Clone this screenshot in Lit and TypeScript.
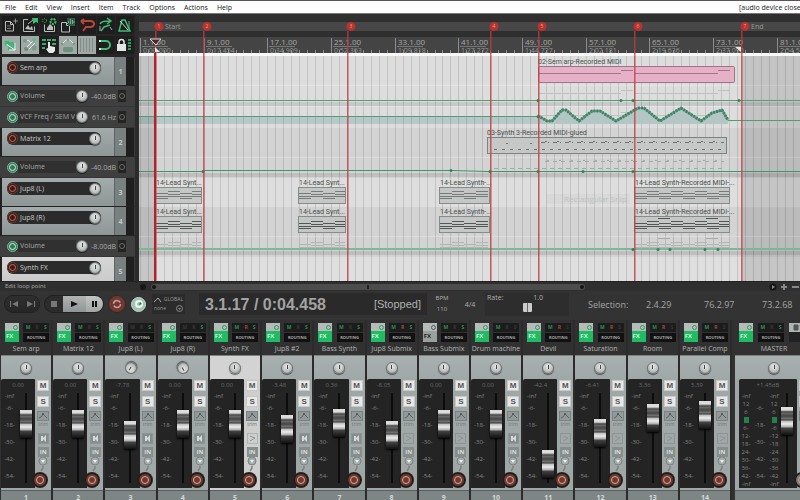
import { LitElement, html, css, svg, nothing } from "lit";
import { customElement, property } from "lit/decorators.js";
import { classMap } from "lit/directives/class-map.js";

const reset = css`
  * { box-sizing: border-box; }
  button, input { margin: 0; padding: 0; border: 0; font: inherit; color: inherit; background: none; }
  button { display: flex; align-items: center; justify-content: center; cursor: pointer; }
  svg { display: block; }
`;

const knob = css`
  .knob {
    appearance: none;
    flex: none;
    width: 12px;
    height: 12px;
    border-radius: 50%;
    background:
      linear-gradient(#444, #444) 50% 2px / 1px 4px no-repeat,
      radial-gradient(circle at 50% 35%, #e8e9e8, #c0c4c3 55%, #8e9291);
    border: 1px solid #6d7271;
    box-shadow: 0 1px 1px #0008;
  }
  .knob::-webkit-slider-thumb { appearance: none; width: 2px; height: 2px; opacity: 0; }
`;

/* ---------- toolbar ---------- */

const page = svg`<path d="M3.5 5.5h5l3 3v6.500h-8z M8.500 5.500v3h3" fill="none" stroke="#b9bdbb"/>`;
const TOOLS = [
  { name: "New project", on: false, icon: svg`${page}<path d="M11 5h5M13.500 2.500v5" stroke="#8d918f"/><path d="M5 10h4M5 12.500h4" stroke="#777"/>` },
  { name: "Open project", on: false, icon: svg`<path d="M7 3.500H2.500v12h11v-5" fill="none" stroke="#b9bdbb"/><path d="M4 13l3-4 2 3 2-2 1 4z" fill="#b9bdbb"/><path d="M7 8l5-4" stroke="#b9bdbb"/><path d="M11 2h6v5l-2-1-3 2 0-2z" fill="#3ebc72"/>` },
  { name: "Save project", on: false, icon: svg`<path d="M4.500 8.500v7h10v-6" fill="none" stroke="#b9bdbb"/><path d="M7 12l3-4 3 3v3H7z" fill="#b9bdbb"/><circle cx="4.500" cy="4.500" r="2" fill="none" stroke="#3ebc72" stroke-dasharray="1 1"/><circle cx="13" cy="5.500" r="2.500" fill="none" stroke="#3ebc72" stroke-width="2" stroke-dasharray="2 1"/>` },
  { name: "Project settings", on: false, icon: svg`<g transform="translate(-1 1)">${page}</g><path d="M8 2h8v8H9z" fill="#2f5f4a"/><path d="M9.500 7V5M11.500 8V3M13.500 8V4M15 7V5" stroke="#77a892"/>` },
  { name: "Undo", on: false, icon: svg`<path d="M3 5h9.500a3.500 3 0 0 1 0 6H8l-3 4M3 5l3-2M3 5l3 3" fill="none" stroke="#bf4438" stroke-width="2"/>` },
  { name: "Redo", on: false, icon: svg`<path d="M3 8c1-3 5-3 10-3M10 2l4 3-4 3M4 15l3-4 6-2" fill="none" stroke="#3ebc72" stroke-width="1.500"/><path d="M3 10v5M13 11l2 3" stroke="#a9adab"/>` },
  { name: "Metronome", on: false, icon: svg`<path d="M6 4h3l5 11H3z" fill="none" stroke="#3ebc72" stroke-width="1.500"/><path d="M4 5l8 9" stroke="#d4d7d5"/><path d="M13 5v9" stroke="#3ebc72"/>` },
  { name: "Auto crossfade", on: true, icon: svg`<path d="M2 4h5v6H2z" fill="#64c08c"/><path d="M6 6h5l3 3-3 5H6z" fill="#49b07a"/><path d="M4 8l9 6M13 7v7H7" stroke="#f0f4f1" fill="none"/><path d="M4 5v4M6 5v3" stroke="#2f9c60"/>` },
  { name: "Item grouping", on: true, icon: svg`<path d="M3 14L14 3M3 7l4-3 3 3-6 6M8 13l6-6" stroke="#e4e8e5" fill="none"/><circle cx="4" cy="5" r="2" fill="#7f9a8c"/><circle cx="13" cy="12" r="2.500" fill="#7f9a8c"/><circle cx="13" cy="4" r="2" fill="#66b98a"/><circle cx="5" cy="13" r="2" fill="#6d8a7b"/>` },
  { name: "Ripple editing", on: false, icon: svg`<path d="M2 3h4v2H2zM7 3h4v2H7zM12 3h4v2h-4zM2 7h4v2H2zM12 7h4v2h-4zM2 11h3v2H2z" fill="#3aa869"/><path d="M8 6h2v4l5 1v4l-2 2H9l-3-4 2-1z" fill="#e6e9e7"/>` },
  { name: "Envelope points", on: true, icon: svg`<path d="M2 9l5-5h4l5 5" fill="none" stroke="#dfe4e1"/><circle cx="3" cy="8" r="1" fill="#5b8a72"/><circle cx="9" cy="4" r="1" fill="#5b8a72"/><circle cx="15" cy="8" r="1" fill="#5b8a72"/><rect x="4" y="11" width="10" height="5" rx="2" fill="#6b917e"/>` },
  { name: "Grid lines", on: true, icon: svg`<path d="M2.500 2v14M5.500 2v14M8.500 2v14M11.500 2v14M14.500 2v14" stroke="#838b89"/>` },
  { name: "Snap", on: false, icon: svg`<path d="M3 5h6a4 4 0 0 1 0 8H3" fill="none" stroke="#3ebc72" stroke-width="2"/><path d="M3 4v2M3 12v2" stroke="#e6e9e7" stroke-width="2"/>` },
  { name: "Lock", on: false, icon: svg`<rect x="1" y="8" width="9" height="7" fill="#e3e6e4"/><path d="M3 8V6a2.500 2.500 0 0 1 5 0v2" fill="none" stroke="#e3e6e4" stroke-width="1.500"/><path d="M12 4h3M12 7h3M12 10h3M12 13h3" stroke="#3ebc72" stroke-width="1.500"/>` },
];

@customElement("tool-bar")
export class ToolBar extends LitElement {
  static styles = [reset, css`
    :host { display: grid; grid-template-columns: repeat(7, 18px); gap: 2px 1px; padding: 2px 0 3px 2px; background: #262626; height: 43px; overflow: hidden; }
    button { width: 18px; height: 18px; background: #1e1e1e; }
    .on { background: #9fa9a5; }
  `];
  render() {
    return TOOLS.map((t) => html`<button class=${classMap({ on: t.on })} aria-label=${t.name}><svg width="18" height="18" viewBox="0 0 18 18">${t.icon}</svg></button>`);
  }
}

/* ---------- track panels ---------- */

@customElement("track-panel")
export class TrackPanel extends LitElement {
  @property() name = "";
  @property({ type: Number }) number = 0;
  @property({ type: Boolean, reflect: true }) selected = false;
  static styles = [reset, knob, css`
    :host { display: flex; height: 29px; padding: 0 0 1px 2px; background: #222; font-size: 7px; overflow: hidden; }
    .face { flex: 1; background: linear-gradient(#a3acaa, #8e9796); padding: 4px 0 0 5px; }
    :host([selected]) .face { background: linear-gradient(#d5d6d5, #c8c9c8); }
    .plate { display: flex; align-items: center; gap: 2px; width: 94px; height: 13px; border-radius: 6px; background: #2b2b2b; color: #cacaca; }
    .arm { width: 11px; height: 11px; border-radius: 50%; background: #3c1c17; border: 1px solid #6e3a31; flex: none; }
    .arm::after { content: ""; width: 5px; height: 5px; border-radius: 50%; border: 1px solid #c2705f; }
    .name { flex: 1; white-space: nowrap; line-height: 12px; }
    .tab { width: 12px; background: #788180; border-left: 1px solid #5d6564; color: #c3c9c8; font-weight: 700; display: flex; align-items: center; justify-content: center; }
    .meter { width: 9px; background: #1f1f1f; border-right: 1px solid #3a3a3a; }
  `];
  render() {
    return html`
      <div class="face"><div class="plate">
        <button class="arm" aria-label="Record arm ${this.name}"></button>
        <span class="name">${this.name}</span>
        <input class="knob" type="range" aria-label="Volume ${this.name}" />
      </div></div>
      <div class="tab">${this.number}</div><div class="meter"></div>`;
  }
}

@customElement("envelope-panel")
export class EnvelopePanel extends LitElement {
  @property() name = "";
  @property() value = "";
  static styles = [reset, knob, css`
    :host { display: flex; align-items: center; height: 21px; padding: 0 9px 0 7px; background: #3f3f3f; border-bottom: 1px solid #353535; font-size: 7px; color: #a8a8a8; }
    .dot { width: 11px; height: 11px; border-radius: 50%; background: #2f7a55; border: 1px solid #7fb89b; flex: none; }
    .dot::after { content: ""; width: 5px; height: 5px; border-radius: 50%; border: 1px solid #d4ede0; }
    .name { flex: 1; height: 12px; line-height: 12px; padding-left: 2px; background: #303030; overflow: hidden; white-space: nowrap; min-width: 0; }
    .value { width: 28px; text-align: right; white-space: nowrap; flex: none; }
    .mod { width: 8px; height: 12px; margin-left: 2px; background: #242424; color: #777; flex: none; }
    .mod::after { content: ""; width: 4px; height: 4px; border: 1px solid #6b6b6b; border-radius: 50%; }
  `];
  render() {
    return html`
      <button class="dot" aria-label="Arm ${this.name}"></button>
      <span class="name">${this.name}</span>
      <input class="knob" type="range" aria-label=${this.name} />
      <span class="value">${this.value}</span>
      <button class="mod" aria-label="Modulation ${this.name}"></button>`;
  }
}

/* ---------- arrange view ---------- */

const BAR = 7.96;
const TOP = { lane: 8, ruler: 23, canvas: 42 };
const RULER: [number, string, string][] = [
  [1, "1.1.00", "0:00.000"], [9, "9.1.00", "0:17.454"], [17, "17.1.00", "0:34.909"], [25, "25.1.00", "0:52.363"],
  [33, "33.1.00", "1:09.818"], [41, "41.1.00", "1:27.272"], [49, "49.1.00", "1:44.727"], [57, "57.1.00", "2:02.181"],
  [65, "65.1.00", "2:19.636"], [73, "73.1.00", "2:37.090"], [81, "81.1.00", "2:54.545"],
];
const MARKERS: [number, string, string][] = [
  [16, "1", "Start"], [64, "2", ""], [208, "3", ""], [351, "4", ""], [399, "5", ""], [495, "6", ""], [602, "7", "End"],
];
/* y, height, shade of every lane below the ruler */
const LANES: [number, number, string][] = [
  [42, 72, "#dcdddc"], [114, 50, "#d2d3d2"], [164, 29, "#dddedd"], [193, 50, "#d2d3d2"], [243, 24, "#dedfde"],
];
const LEADS: [number, number, string][] = [
  [16, 47, "14-Lead Synt..."], [159, 48, "14-Lead Synt..."], [300, 51, "14-Lead Synth-..."], [495, 96, "14-Lead Synth-Recorded MIDI-..."],
];
const WAVE = "399,102 403,104 408,107 413,107 423,96 427,96 440,107 453,97 461,97 477,107 499,94 505,94 521,107 542,94 562,107 573,99 583,96 589,106";

function notes(x: number, y: number, w: number, color: string, strong = false) {
  const out = [];
  for (let i = 0; i * 12 < w - 4; i++) {
    const dy = i % 2 ? -1 : 1;
    const len = Math.min(12, w - i * 12);
    for (const row of strong ? [0, 3, 5] : [-1, 2, 4]) {
      out.push(svg`<rect x=${x + i * 12} y=${y + row + dy} width=${len} height="1" fill=${color}></rect>`);
    }
  }
  return out;
}

@customElement("arrange-view")
export class ArrangeView extends LitElement {
  static styles = css`
    :host { display: block; min-width: 0; overflow: hidden; background: #2f2f2f; }
    svg { display: block; width: 100%; height: 267px; font-family: "Open Sans", "Noto Sans", sans-serif; font-size: 7px; }
    .bars { font-size: 8px; fill: #a8a8a8; }
    .clip { fill: #4a4f4d; font-family: Roboto, "Noto Sans", sans-serif; }
    .ghost { fill: #bfc1c2; font-size: 8px; }
    .mark { font-size: 5px; fill: #e0a8a2; text-anchor: middle; }
    .title { fill: #9a9a9a; }
  `;
  render() {
    const bars = Array.from({ length: 240 }, (_, i) => Math.round(1 + i * BAR));
    return html`<svg role="img" aria-label="Arrange view">
      <rect y=${TOP.lane} width="100%" height="9" fill="#464746"></rect>
      <rect y=${TOP.ruler} width="100%" height="16" fill="#434443"></rect>
      <rect y="39" width="100%" height="3" fill="#f8f8f8"></rect>
      ${bars.map((x) => svg`<rect x=${x} y="36" width="1" height="3" fill="#8c8c8c"></rect>`)}
      ${RULER.map(([n, a, b]) => {
        const x = Math.round(1 + (n - 1) * BAR);
        return svg`<rect x=${x} y="24" width="1" height="15" fill="#8c8c8c"></rect>
          <text class="bars" x=${x + 3} y="31">${a}</text>
          <rect x=${x + 2} y="32" width="26" height="1" fill="#777"></rect>
          <text x=${x + 3} y="39" fill="#989898">${b}</text>`;
      })}
      ${LANES.map(([y, h, c]) => svg`<rect y=${y} width="100%" height=${h} fill=${c}></rect>`)}
      <rect y="102" width="399" height="8" fill="#b8c8c7"></rect>
      ${[88, 159, 237].map((y) => svg`<rect y=${y} width="100%" height="4" fill="#00000018"></rect>`)}
      ${bars.map((x) => svg`<rect x=${x} y="42" width="1" height="225" fill="#0000001f"></rect>`)}
      ${[71, 92, 143, 222].map((y) => svg`<rect y=${y} width="100%" height="1" fill="#ffffff40"></rect>`)}
      <rect x="0" y="42" width="16" height="225" fill="#0000001c"></rect>
      <rect x="603" y="42" width="100%" height="225" fill="#0000001c"></rect>

      <rect x="407" y="180" width="84" height="10" fill="#00000006"></rect>
      <text class="ghost" x="425" y="188">Rectangular Snip</text>

      <text class="clip" x="399" y="50">02-Sem arp-Recorded MIDI</text>
      <rect x="399.5" y="52.500" width="196" height="16" rx="1" fill="#e6b0c6" stroke="#9c7484"></rect>
      <path d="M400 59.500h82m0-3h12m2 3h83m0-3h12" stroke="#a3758a" fill="none"></path>
      <path d="M400 79.500h82m0-3h12m2 3h83m0-3h12M400 101.500h82m0-3h12m2 3h83" stroke="#bfc1c0" fill="none"></path>

      <text class="clip" x="348" y="121">03-Synth 3-Recorded MIDI-glued</text>
      <rect x="348.500" y="123.500" width="239" height="16" fill="#c6c8c7" stroke="#7d8382"></rect>
      <path d="M355 135.500h230" stroke="#6c7270" stroke-dasharray="3 5"></path>
      <path d="M367 129.500h34" stroke="#6c7270" stroke-dasharray="2 22"></path>
      <path d="M402 128.500h183" stroke="#6c7270" stroke-dasharray="4 3 1 4"></path>
      <path d="M406 127.500h179" stroke="#6c7270" stroke-dasharray="2 10"></path>
      <path d="M355 154.500h230M406 147.500h179" stroke="#a5a9a8" stroke-dasharray="4 4"></path>
      <path d="M408 146.500h177" stroke="#a5a9a8" stroke-dasharray="2 10"></path>

      ${LEADS.map(([x, w, label]) => svg`
        ${[173, 202].map((y, i) => svg`
          <text class="clip" x=${x + 1} y=${y - 2}>${label}</text>
          <rect x=${x + 0.5} y=${y + 0.5} width=${w - 1} height="16" fill="#c4c7c6" stroke="#858c8a"></rect>
          ${notes(x + 1, y + 6, w - 2, i ? "#515856" : "#757d7a", i === 1)}
        `)}
        ${notes(x + 1, 230, w - 2, "#b2b5b4", false)}`)}
      <path d="M519 204.500h12m36 0h12" stroke="#515856"></path>
      <path d="M519 224.500h12m36 0h12" stroke="#aaa"></path>

      <path d="M0 86.500h100000M0 102.500h399M589 106.500h100000" stroke="#4f9f76" fill="none"></path>
      <path d="M0 157.500h64v-1h248l36 1h100000" stroke="#3f9569" fill="none"></path>
      <path d="M0 235h100000" stroke="#7db795" stroke-width="2"></path>
      <polygon points="399,110 ${WAVE} 589,110" fill="#b3c6c3"></polygon>
      <polyline points=${WAVE} fill="none" stroke="#6ea08c" stroke-width="2"></polyline>
      <polyline points=${WAVE} fill="none" stroke="#3f8468" stroke-width="3" stroke-linejoin="round" stroke-dasharray="2 1"></polyline>
      ${[[399, 86], [482, 86], [494, 86], [600, 86], [399, 102], [64, 157], [312, 156], [351, 157], [399, 157], [444, 157], [494, 157], [494, 235], [519, 235], [531, 235], [566, 235], [579, 235]].map(
        ([x, y]) => svg`<circle cx=${x} cy=${y + 0.5} r="1.500" fill="#2f8458"></circle>`,
      )}

      ${MARKERS.map(([x, n, title]) => svg`
        <rect x=${x} y="17" width="2" height="250" fill="#bf3a4470"></rect>
        <rect x=${x} y="17" width="1" height="250" fill="#bf3a4490"></rect>
        <circle cx=${x + 4} cy="12.500" r="4.500" fill="#b8332f"></circle>
        <text class="mark" x=${x + 4} y="14">${n}</text>
        ${title ? svg`<text class="title" x=${x + 10} y="15">${title}</text>` : nothing}`)}
      <rect x="15" y="39" width="2" height="228" fill="#b5202a"></rect>
      <path d="M11 25h11l-5 6z" fill="#5a2320" stroke="#d9d9d9"></path>
      <path d="M16 38v-5l5 5zM602 38v-5h-6z" fill="#e4e4e4"></path>
    </svg>`;
  }
}

/* ---------- transport ---------- */

@customElement("transport-bar")
export class TransportBar extends LitElement {
  static styles = [reset, css`
    :host { display: flex; align-items: center; height: 29px; padding: 0 4px 3px; background: #333; color: #b0b0b0; font-size: 7px; white-space: nowrap; overflow: hidden; }
    .pill { display: flex; height: 18px; border-radius: 9px; overflow: hidden; flex: none; background: #222; border: 1px solid #202020; }
    .skip { width: 17px; background: linear-gradient(#2f2f2f, #262626); color: #777; }
    .play { width: 60px; margin-left: 4px; }
    .stop { width: 18px; background: #2c2c2c; color: #777; }
    .go { width: 23px; background: linear-gradient(#b0b5b4, #8f9594); color: #111; }
    .pause { flex: 1; background: linear-gradient(#c1c5c4, #a2a7a6); color: #111; }
    .round { flex: none; border-radius: 50%; }
    .rec { width: 18px; height: 18px; margin-left: 4px; background: #6b3b33; border: 1px solid #3d2520; color: #d89a8c; }
    .loop { width: 15px; height: 15px; margin-left: 5px; background: #9fc4b1; border: 1px solid #c4d6cc; color: #2d6a4b; }
    .global { margin-left: 6px; width: 33px; height: 20px; padding: 1px 2px; background: #2b2b2b; font-size: 5px; line-height: 9px; color: #999; flex: none; }
    .row { display: flex; align-items: center; justify-content: space-between; }
    .time { display: flex; align-items: center; justify-content: space-between; flex: none; width: 228px; height: 22px; margin-left: 14px; padding: 0 6px; background: #2a2a2a; font-family: "Liberation Sans", Arial, sans-serif; }
    .clock { font-size: 16px; font-weight: 700; color: #a3a3a3; }
    .state { font-size: 11px; }
    .bpm { width: 30px; text-align: center; line-height: 11px; font-size: 6px; flex: none; }
    .sig { width: 26px; text-align: center; flex: none; }
    .rate { width: 84px; flex: none; height: 23px; background: #2d2d2d; margin-left: 2px; padding: 0 2px; line-height: 10px; }
    .rate .row { padding-right: 24px; }
    .slider { appearance: none; display: block; width: 100%; height: 10px; }
    .slider::-webkit-slider-thumb { appearance: none; width: 9px; height: 9px; background: linear-gradient(90deg, #ccc 4px, #666 4px, #666 5px, #ccc 5px); border-radius: 1px; }
    .sel { display: flex; flex: 1; font-size: 9px; margin-left: 19px; color: #a5a5a5; }
    .sel span { width: 58px; flex: none; }
  `];
  render() {
    return html`
      <div class="pill">
        <button class="skip" aria-label="Go to start"><svg width="8" height="6"><path d="M0 0h1v6h-1zM8 0v6l-6-3z" fill="currentColor" /></svg></button>
        <button class="skip" aria-label="Go to end"><svg width="8" height="6"><path d="M7 0h1v6h-1zM0 0v6l6-3z" fill="currentColor" /></svg></button>
      </div>
      <div class="pill play">
        <button class="stop" aria-label="Stop"><svg width="6" height="6"><path d="M0 0h6v6h-6z" fill="currentColor" /></svg></button>
        <button class="go" aria-label="Play"><svg width="7" height="6"><path d="M0 0l7 3-7 3z" fill="currentColor" /></svg></button>
        <button class="pause" aria-label="Pause"><svg width="5" height="6"><path d="M0 0h2v6h-2zM3 0h2v6h-2z" fill="currentColor" /></svg></button>
      </div>
      <button class="round rec" aria-label="Record"><svg width="10" height="10"><circle cx="5" cy="5" r="3.500" fill="none" stroke="currentColor" stroke-width="1.500" stroke-dasharray="9 2" /></svg></button>
      <button class="round loop" aria-label="Repeat"><svg width="10" height="10"><circle cx="5" cy="5" r="3" fill="none" stroke="#f0f5f2" stroke-width="2" /><path d="M6 3l2 2-3 1z" fill="currentColor" /></svg></button>
      <div class="global">
        <div class="row"><svg width="8" height="6"><path d="M0 5l2-2 2-2 3 4" fill="none" stroke="#aaa" /></svg><span>GLOBAL</span></div>
        <div class="row"><span>none</span><svg width="7" height="7"><circle cx="3.500" cy="3.500" r="3" fill="none" stroke="#888" /><path d="M2 3h3l-1.500 2z" fill="#888" /></svg></div>
      </div>
      <div class="time"><span class="clock">3.1.17 / 0:04.458</span><span class="state">[Stopped]</span></div>
      <div class="bpm">BPM<br />110</div>
      <div class="sig">4/4</div>
      <label class="rate"><span class="row"><span>Rate:</span><span>1.0</span></span>
        <input class="slider" type="range" min="0" max="2" step="0.01" value="1" /></label>
      <div class="sel"><span>Selection:</span><span>2.4.29</span><span>76.2.97</span><span>73.2.68</span></div>`;
  }
}

/* ---------- mixer ---------- */

interface Strip {
  name: string; vol: string; fader: number; pan: number; lit: string; selected?: boolean; fxOff?: boolean; speaker?: boolean;
}
const STRIPS: Strip[] = [
  { name: "Sem arp", vol: "0.00", fader: 45, pan: 0, lit: "MS", speaker: true },
  { name: "Matrix 12", vol: "0.00", fader: 45, pan: 0, lit: "MS", speaker: true },
  { name: "Jup8 (L)", vol: "-7.78", fader: 34, pan: -150, lit: "S", speaker: true },
  { name: "Jup8 (R)", vol: "0.00", fader: 45, pan: 150, lit: "S", speaker: true },
  { name: "Synth FX", vol: "0.00", fader: 45, pan: 0, lit: "MRS", selected: true },
  { name: "Jup8 #2", vol: "-3.48", fader: 40, pan: 0, lit: "MS", speaker: true },
  { name: "Bass Synth", vol: "0.36", fader: 46, pan: 0, lit: "MS", speaker: true },
  { name: "Jup8 Submix", vol: "-8.05", fader: 34, pan: 0, lit: "MRS" },
  { name: "Bass Submix", vol: "0.00", fader: 45, pan: 0, lit: "MS", fxOff: true },
  { name: "Drum machine", vol: "0.00", fader: 45, pan: 0, lit: "M", speaker: true },
  { name: "Devil", vol: "-42.4", fader: 5, pan: 0, lit: "MR" },
  { name: "Saturation", vol: "-6.41", fader: 36, pan: 0, lit: "MR" },
  { name: "Room", vol: "3.36", fader: 51, pan: 0, lit: "MR" },
  { name: "Parallel Comp", vol: "5.39", fader: 54, pan: 0, lit: "MR" },
];
const METER_LEFT = ["-inf", "12", "6", "", "6-", "12-", "18-", "24-", "30-", "36-", "42-", "-inf"];
const METER_RIGHT = ["-inf", "12", "6", "", "-6", "-12", "-18", "-24", "-30", "-36", "-42", "-inf"];
const DB = ["-6-", "-18-", "-30-", "-42-", "-54-"];

@customElement("mixer-strip")
export class MixerStrip extends LitElement {
  @property({ attribute: false }) strip!: Strip;
  @property() label = "";
  @property({ type: Boolean, reflect: true }) master = false;
  @property({ type: Boolean, reflect: true }) selected = false;
  static styles = [reset, knob, css`
    :host { display: flex; flex-direction: column; min-width: 0; overflow: hidden; font-size: 7px; color: #b5b5b5; border-right: 2px solid #2b2b2b; --face: #a0a8a7; }
    :host([selected]) { --face: #cdcecd; }
    .head { display: flex; justify-content: space-between; padding: 3px 2px 0 4px; height: 22px; flex: none; }
    .fx { display: flex; flex-direction: column; width: 14px; height: 19px; background: #b4bbb9; color: #d8f5e4; font-size: 6px; font-weight: 700; }
    .power { height: 8px; width: 14px; padding: 2px 2px 0 8px; }
    .tag { width: 14px; height: 11px; line-height: 11px; background: #1fbd63; text-align: left; padding-left: 1px; }
    .off { background: #99a19f; color: #222; }
    .io { display: flex; flex-direction: column; gap: 1px; width: 26px; flex: none; }
    .leds { display: flex; justify-content: space-around; height: 9px; line-height: 9px; font-size: 5px; font-weight: 700; background: #1c1c1c; color: #383838; }
    .g { color: #2f8a58; } .r { color: #a04a3c; }
    .routing { height: 9px; background: #111; font-size: 4px; font-weight: 700; color: #aaa; }
    .mono { width: 17px; height: 19px; flex-direction: column; justify-content: flex-start; background: #222; font-size: 4px; font-weight: 700; color: #aaa; line-height: 10px; }
    .mono svg { background: #aeb5b3; }
    .name { height: 13px; line-height: 14px; text-align: center; white-space: nowrap; overflow: hidden; flex: none; }
    .pan { display: flex; justify-content: center; padding-top: 6px; height: 24px; flex: none; background: linear-gradient(#a9b1b0, var(--face)); border-top: 1px solid #7b8281; }
    :host([selected]) .pan { background: #d2d3d2; }
    .body { display: flex; flex: none; height: 112px; background: var(--face); padding-bottom: 3px; border-bottom: 1px solid #5a605f; }
    .panel { display: grid; grid-template-columns: 17px 1fr; grid-template-rows: 14px 95px; flex: 1; min-width: 0; height: 109px; background: #242424; border-radius: 2px 1px 0 0; font-size: 6px; color: #858585; }
    .vol { grid-column: 1 / -1; line-height: 13px; text-align: center; color: #6a6a6a; }
    .scale { display: flex; flex-direction: column; align-items: center; line-height: 6px; }
    .scale span { height: 17px; flex: none; white-space: nowrap; }
    .scale .inf { height: 12px; }
    .fader { appearance: none; writing-mode: vertical-lr; direction: rtl; width: 12px; height: 90px; margin-left: 2px; background: linear-gradient(#0c0c0c, #0c0c0c) 50% 0 / 2px 90px no-repeat; }
    .fader::-webkit-slider-thumb { appearance: none; width: 12px; height: 28px;
      background: linear-gradient(#dcdcdc 0 3px, #8d8d8d 4px, #3a3a3a 5px, #6c6c6c 6px, #444 9px, #777 12px, #333 13px, #bbb 14px, #ececec 17px, #aaa 20px, #444 21px, #111 28px);
      box-shadow: 0 1px 2px #000; }
    .side { display: flex; flex-direction: column; align-items: center; width: 16px; flex: none; padding-top: 1px; font-size: 8px; font-weight: 700; }
    .key { width: 12px; height: 11px; flex: none; background: #e8e8e8; border: 1px solid #c8c8c8; color: #555; font-family: "Liberation Sans", Arial, sans-serif; }
    .solo { margin-top: 5px; }
    .env { width: 12px; height: 10px; margin-top: 4px; flex: none; background: #929a99; border: 1px solid #7c8483; }
    .trim { font-size: 5px; line-height: 6px; font-weight: 400; color: #6f7776; height: 10px; }
    .spk { width: 11px; height: 11px; margin-top: 3px; flex: none; border: 1px solid #8d9594; }
    .wired { background: #868e8d; }
    :host([selected]) .spk { border-color: #b0b4b3; }
    .in { width: 11px; height: 10px; margin-top: 3px; flex: none; background: #868e8d; color: #d8dcdb; font-size: 6px; line-height: 8px; }
    .tri { height: 17px; flex: none; }
    .arm { width: 14px; height: 14px; flex: none; margin: -1px 6px 0 0; border-radius: 50%; background: #6b3a31; border: 1px solid #1f1513; box-shadow: 0 0 0 1px #242424; }
    .arm::after { content: ""; width: 6px; height: 6px; border-radius: 50%; border: 1px solid #e0a898; }
    .foot { flex: 1; min-height: 8px; background: #7e8685; color: #d3d8d7; font-weight: 700; text-align: center; line-height: 14px; }
    :host([master]) .head { justify-content: flex-start; gap: 5px; }
    :host([master]) .panel { margin-left: 4px; grid-template-columns: 42px 1fr; }
    :host([master]) .fader { margin-left: 0; }
    :host([master]) .arm { background: #777; }
    .meters { display: grid; grid-template-columns: 1fr 1fr 1fr; text-align: center; line-height: 6px; }
    .col { display: flex; flex-direction: column; }
    .col span { height: 8px; flex: none; }
    .mid { padding-top: 12px; }
    .mid span { height: 17px; }
    .col .lit { height: 6px; width: 5px; margin: 0 auto 2px; background: #23814f; }
  `];
  render() {
    const s = this.strip;
    const led = (c: string) => html`<span class=${classMap({ g: s.lit.includes(c) && c !== "R", r: s.lit.includes(c) && c === "R" })}>${c}</span>`;
    const meter = (labels: string[]) => html`<div class="col">${labels.map((d) => (d ? html`<span>${d}</span>` : html`<span class="lit"></span>`))}</div>`;
    return html`
      <div class="head">
        <button class="fx" aria-label="FX ${s.name}">
          <span class="power"><svg width="5" height="5"><circle cx="2.500" cy="2.500" r="2" fill="none" stroke=${s.fxOff ? "#555" : "#2a9c5c"} /></svg></span>
          <span class=${classMap({ tag: true, off: !!s.fxOff })}>FX</span>
        </button>
        <div class="io"><div class="leds">${["M", "R", "S"].map(led)}</div><button class="routing">ROUTING</button></div>
        ${this.master ? html`<button class="mono" aria-label="Mono"><svg width="17" height="9"><path d="M5 2h4v5H5zM11 2l3 5" fill="#555" stroke="#555" /></svg></button>` : nothing}
      </div>
      <div class="name">${s.name}</div>
      <div class="pan"><input class="knob" type="range" min="-150" max="150" .value=${String(s.pan)} style="rotate: ${s.pan}deg" aria-label="Pan ${s.name}" /></div>
      <div class="body">
        <div class="panel">
          <div class="vol">${s.vol}</div>
          ${this.master
            ? html`<div class="meters">${meter(METER_LEFT)}<div class="col mid">${DB.map((d) => html`<span>${d}</span>`)}</div>${meter(METER_RIGHT)}</div>`
            : html`<div class="scale"><span class="inf">-inf</span>${DB.map((d) => html`<span>${d}</span>`)}</div>`}
          <input class="fader" type="range" min="0" max="62" .value=${String(s.fader)} aria-label="Volume ${s.name}" />
        </div>
        <div class="side">
          <button class="key" aria-label="Mute ${s.name}">M</button>
          <button class="key solo" aria-label="Solo ${s.name}">S</button>
          <button class="env" aria-label="Envelopes ${s.name}"><svg width="10" height="8"><path d="M1 6l2-1 2-3 2 2 2 2" fill="none" stroke="#5d6463" /><circle cx="5" cy="2" r="1" fill="#4d5453" /></svg></button>
          <span class="trim">trim</span>
          <button class=${classMap({ spk: true, wired: !!s.speaker })} aria-label="Monitor ${s.name}"><svg width="9" height="9"><path d=${s.speaker ? "M2 2h2v5H2zM4 4l3-3v7l-3-3z" : "M2 2l5 2-5 3"} fill=${s.speaker ? "#d5d9d8" : "none"} stroke=${s.speaker ? "none" : "#8d9594"} /></svg></button>
          <button class="in" aria-label="Input ${s.name}">IN</button>
          <svg class="tri" width="12" height="17"><circle cx="6" cy="4" r="4" fill="#a5adac" stroke="#7c8483" /><path d="M4 3h4l-2 3z" fill="#eef0ef" /><path d="M6 9v2l-2 3" fill="none" stroke="#7c8483" stroke-width="1.500" /></svg>
          <button class="arm" aria-label="Record arm ${s.name}"></button>
        </div>
      </div>
      <div class="foot">${this.label}</div>`;
  }
}

/* ---------- shell ---------- */

@customElement("app-root")
export class AppRoot extends LitElement {
  static styles = [reset, css`
    :host { display: flex; flex-direction: column; height: 100vh; overflow: hidden; background: #333; color: #b0b0b0; font: 7px/9px "Open Sans", "Noto Sans", sans-serif; }
    .menu { display: flex; align-items: center; gap: 9px; height: 14px; flex: none; padding: 0 0 0 5px; background: #fdfdfd; border-top: 1px solid #555; border-bottom: 1px solid #777; color: #222; white-space: nowrap; }
    .device { margin-left: auto; width: 61px; overflow: hidden; }
    .work { display: grid; grid-template-columns: 135px 1fr; column-gap: 4px; height: 267px; flex: none; background: #2b2b2b; overflow: hidden; }
    .panels { display: flex; flex-direction: column; min-width: 0; overflow: hidden; }
    .panels > * { flex: none; }
    .status { display: flex; align-items: center; height: 10px; flex: none; padding-left: 5px; background: #2f2f2f; border-top: 1px solid #222; font-size: 6px; color: #aaa; }
    .msg { width: 135px; }
    .left { width: 6px; height: 6px; border-radius: 3px; background: #181818; margin-right: 5px; }
    .bar { display: flex; justify-content: space-between; align-items: center; flex: 0 1 434px; height: 6px; padding: 0 1px; border-radius: 3px; background: #4b4c4b; }
    .grip { width: 4px; height: 4px; border-radius: 2px; background: #151515; }
    .tick { width: 2px; height: 4px; background: #222; }
    .zoom { display: flex; gap: 3px; margin-left: auto; width: 31px; color: #888; overflow: hidden; }
    .zoom button { flex: none; width: 8px; height: 9px; }
    .mixer { display: flex; flex: 1; min-height: 0; overflow: hidden; padding-left: 1px; background: #313131; gap: 3px; }
    .strips { display: grid; grid-template-columns: repeat(14, minmax(0, 1fr)); flex: 1; }
    .master { width: 65px; flex: none; display: grid; grid-template-columns: 80px; overflow: hidden; }
  `];
  render() {
    return html`
      <nav class="menu">
        ${["File", "Edit", "View", "Insert", "Item", "Track", "Options", "Actions", "Help"].map((m) => html`<button>${m}</button>`)}
        <span class="device">[audio device closed]</span>
      </nav>
      <main class="work">
        <div class="panels">
          <tool-bar></tool-bar>
          <track-panel name="Sem arp" number="1"></track-panel>
          <envelope-panel name="Volume" value="-40.0dB"></envelope-panel>
          <envelope-panel name="VCF Freq / SEM V" value="61.6 Hz"></envelope-panel>
          <track-panel name="Matrix 12" number="2"></track-panel>
          <envelope-panel name="Volume" value="-40.0dB"></envelope-panel>
          <track-panel name="Jup8 (L)" number="3"></track-panel>
          <track-panel name="Jup8 (R)" number="4"></track-panel>
          <envelope-panel name="Volume" value="-8.00dB"></envelope-panel>
          <track-panel name="Synth FX" number="5" selected></track-panel>
        </div>
        <arrange-view></arrange-view>
      </main>
      <div class="status">
        <span class="msg">Edit loop point</span><span class="left"></span>
        <div class="bar"><span class="grip"></span><span class="tick"></span><span class="grip"></span></div>
        <div class="zoom">
          <button aria-label="Scroll right"><svg width="8" height="8"><circle cx="4" cy="4" r="3.500" fill="#151515" /><path d="M3 2l3 2-3 2z" fill="#888" /></svg></button>
          <button aria-label="Zoom in"><svg width="8" height="8"><path d="M4 1v6M1 4h6" stroke="currentColor" stroke-width="2" /></svg></button>
          <button aria-label="Zoom out"><svg width="8" height="8"><path d="M1 4h7" stroke="currentColor" stroke-width="2" /></svg></button>
        </div>
      </div>
      <transport-bar></transport-bar>
      <section class="mixer">
        <div class="strips">${STRIPS.map((s, i) => html`<mixer-strip .strip=${s} label=${i + 1} ?selected=${!!s.selected}></mixer-strip>`)}</div>
        <div class="master"><mixer-strip master .strip=${{ name: "MASTER", vol: "+1.45dB", fader: 48, pan: 0, lit: "MS" }}></mixer-strip></div>
      </section>`;
  }
}
